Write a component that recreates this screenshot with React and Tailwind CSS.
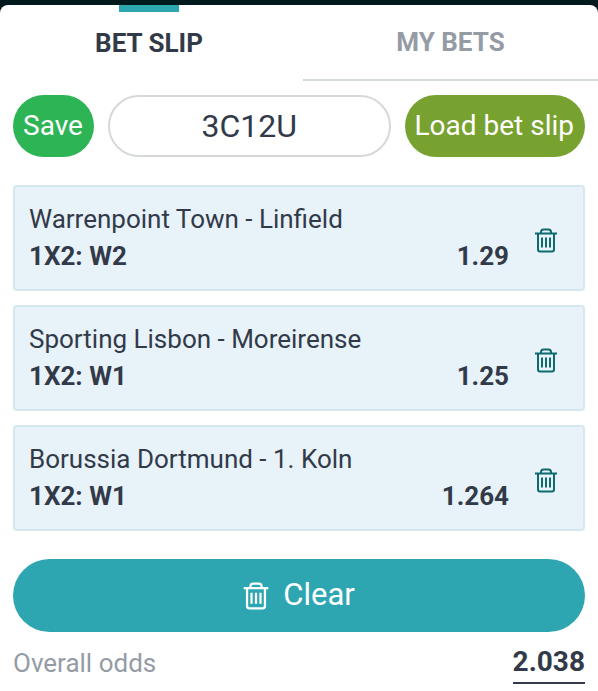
import React, { useState } from 'react'

const initialBets = [
  { id: 1, match: 'Warrenpoint Town - Linfield', pick: '1X2: W2', odds: '1.29' },
  { id: 2, match: 'Sporting Lisbon - Moreirense', pick: '1X2: W1', odds: '1.25' },
  { id: 3, match: 'Borussia Dortmund - 1. Koln', pick: '1X2: W1', odds: '1.264' },
]

const TrashIcon = ({ className }) => (
  <svg className={className} viewBox="0 0 22 25" fill="none" stroke="currentColor" strokeWidth="2" aria-hidden="true">
    <path d="M0 5.500h22" />
    <path d="M6 5.500V4a2.500 2.500 0 0 1 2.500-2.500h5a2.500 2.500 0 0 1 2.500 2.500v1.500" />
    <path d="M3 5.500v16a2 2 0 0 0 2 2h12a2 2 0 0 0 2-2v-16" />
    <path d="M7 9.500v10M11 9.500v10M15 9.500v10" />
  </svg>
)

const BetCard = ({ bet, onRemove }) => (
  <li className="flex items-center rounded border-2 border-[#d5e7f0] bg-[#e7f2f9] py-3.5 pl-3.5 pr-6">
    <div className="min-w-0 flex-1">
      <p className="text-[26px] leading-[37px]">{bet.match}</p>
      <div className="flex justify-between text-[26px] leading-[37px] font-bold">
        <span>{bet.pick}</span>
        <span>{bet.odds}</span>
      </div>
    </div>
    <button type="button" aria-label={`Remove ${bet.match}`} onClick={() => onRemove(bet.id)} className="ml-6 cursor-pointer px-0.5 pt-1 text-[#0d6b70]">
      <TrashIcon className="h-[25px] w-[22px]" />
    </button>
  </li>
)

const App = () => {
  const [bets, setBets] = useState(initialBets)
  const [code, setCode] = useState('3C12U')

  return (
    <div className="min-h-screen bg-[#00191c] pt-[5px] font-[Roboto,sans-serif] text-[#323a49]">
      <main className="min-h-[calc(100vh-5px)] rounded-t-lg bg-white">
        <div role="tablist" className="grid h-[76px] grid-cols-2">
          <button type="button" role="tab" aria-selected="true" className="mr-px flex cursor-pointer flex-col items-center text-[26px] leading-8 font-bold">
            <span className="mb-[15px] h-[7px] w-[60px] bg-[#2ea6b2]" />
            BET SLIP
          </button>
          <button type="button" role="tab" aria-selected="false" className="ml-1 cursor-pointer border-b-2 border-[#d3dbdd] text-[26px] leading-8 font-bold text-[#959ba5]">
            MY BETS
          </button>
        </div>

        <div className="px-[13px]">
          <form className="mt-3.5 flex h-[62px] gap-3.5" onSubmit={(e) => e.preventDefault()}>
            <button type="button" className="shrink-0 cursor-pointer rounded-full bg-[#2db454] pl-2.5 pr-[11px] text-[28px] text-white">Save</button>
            <input
              type="text"
              aria-label="Bet slip code"
              value={code}
              onChange={(e) => setCode(e.target.value)}
              className="w-0 min-w-0 flex-1 rounded-full border-2 border-[#d5d9db] text-center text-[32px] outline-none"
            />
            <button type="submit" className="shrink-0 cursor-pointer rounded-full bg-[#78a22f] pl-2.5 pr-[11px] text-[28px] text-white">Load bet slip</button>
          </form>

          <ul className="mt-7 flex flex-col gap-3.5">
            {bets.map((bet) => (
              <BetCard key={bet.id} bet={bet} onRemove={(id) => setBets(bets.filter((b) => b.id !== id))} />
            ))}
          </ul>

          <button type="button" onClick={() => setBets([])} className="mt-7 flex h-[73px] w-full cursor-pointer items-center justify-center gap-3.5 rounded-full bg-[#2ea6b2] text-[31px] text-white">
            <TrashIcon className="h-7 w-[26px]" />
            Clear
          </button>

          <div className="mt-3.5 flex items-start justify-between">
            <span className="text-[26px] leading-[35px] text-[#959ba5]">Overall odds</span>
            <span className="border-b-2 border-[#323a49] pb-1 text-[28px] leading-8 font-bold">2.038</span>
          </div>
        </div>
      </main>
    </div>
  )
}

export default App
